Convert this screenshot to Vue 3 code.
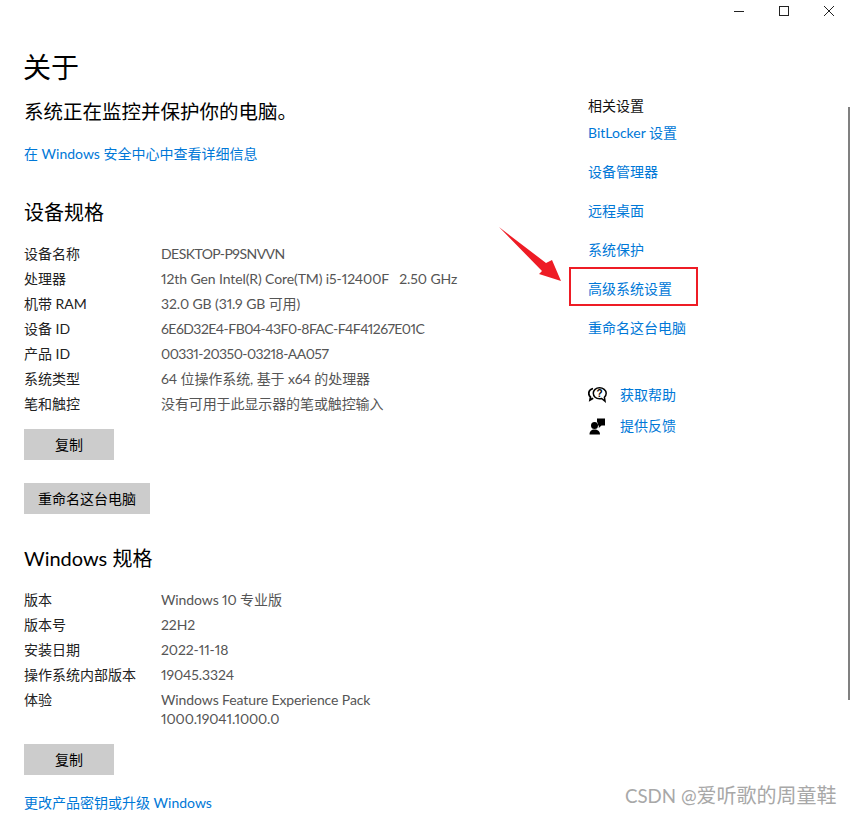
<script setup>
const spec1 = [
  ['设备名称', 'DESKTOP-P9SNVVN', true],
  ['处理器', '12th Gen Intel(R) Core(TM) i5-12400F   2.50 GHz'],
  ['机带 RAM', '32.0 GB (31.9 GB 可用)'],
  ['设备 ID', '6E6D32E4-FB04-43F0-8FAC-F4F41267E01C', true],
  ['产品 ID', '00331-20350-03218-AA057', true],
  ['系统类型', '64 位操作系统, 基于 x64 的处理器'],
  ['笔和触控', '没有可用于此显示器的笔或触控输入'],
]
const spec2 = [
  ['版本', 'Windows 10 专业版'],
  ['版本号', '22H2'],
  ['安装日期', '2022-11-18'],
  ['操作系统内部版本', '19045.3324'],
  ['体验', 'Windows Feature Experience Pack\n1000.19041.1000.0'],
]
const links = ['BitLocker 设置', '设备管理器', '远程桌面', '系统保护', '高级系统设置', '重命名这台电脑']
</script>

<template>
  <div class="window">
    <header class="titlebar">
      <svg class="cap" width="12" height="12" viewBox="0 0 12 12"><path d="M1 6.5H11" stroke="#222" fill="none" /></svg>
      <svg class="cap" width="12" height="12" viewBox="0 0 12 12"><rect x="1.5" y="1.5" width="9" height="9" stroke="#222" fill="none" /></svg>
      <svg class="cap" width="12" height="12" viewBox="0 0 12 12"><path d="M1 1L11 11M11 1L1 11" stroke="#222" fill="none" /></svg>
    </header>

    <div class="columns">
      <main class="main">
        <h1 class="title">关于</h1>
        <p class="status">系统正在监控并保护你的电脑。</p>
        <a class="link security">在 Windows 安全中心中查看详细信息</a>

        <h2 class="section first">设备规格</h2>
        <dl class="specs">
          <div v-for="row in spec1" :key="row[0]" class="row">
            <dt>{{ row[0] }}</dt>
            <dd :class="{ tight: row[2] }">{{ row[1] }}</dd>
          </div>
        </dl>
        <button class="btn copy1">复制</button>
        <button class="btn rename">重命名这台电脑</button>

        <h2 class="section second">Windows 规格</h2>
        <dl class="specs">
          <div v-for="row in spec2" :key="row[0]" class="row">
            <dt>{{ row[0] }}</dt>
            <dd>{{ row[1] }}</dd>
          </div>
        </dl>
        <button class="btn copy2">复制</button>
        <a class="link product">更改产品密钥或升级 Windows</a>
      </main>

      <aside class="side">
        <div class="side-title">相关设置</div>
        <div class="side-links">
          <a v-for="l in links" :key="l" class="link side-link" :class="{ boxed: l === '高级系统设置' }">{{ l }}</a>
        </div>
        <div class="help">
          <div class="help-row">
            <svg width="19" height="18" viewBox="0 0 19 18">
              <path d="M5 2.500C2.500 3.300 .8 5.200 .8 7.500c0 1.400.6 2.700 1.700 3.600L2 14l3.200-1.700" fill="none" stroke="#000" stroke-width="1.800" />
              <path d="M11.500 1.800C8 1.800 5.300 4.200 5.300 7.300c0 3.100 2.700 5.500 6.200 5.500 .8 0 1.500-.1 2.100-.3l3.400 2.700-.6-4c1.100-1 1.800-2.400 1.800-3.900C18.200 4.200 15 1.800 11.500 1.800z" fill="#fff" stroke="#000" stroke-width="1.500" />
              <text x="11.600" y="10.800" text-anchor="middle" class="qmark">?</text>
            </svg>
            <a class="link">获取帮助</a>
          </div>
          <div class="help-row">
            <svg width="19" height="18" viewBox="0 0 19 18">
              <circle cx="6.500" cy="8.500" r="3.500" fill="#000" />
              <path d="M1.500 17.500c0-3.500 2-5 5-5s5.500 1.500 5.500 5z" fill="#000" />
              <path d="M9 1.500h8v7h-3.500L10.800 11V8.500H10c.3-1.500-.2-2.700-1-3.500z" fill="#000" />
            </svg>
            <a class="link">提供反馈</a>
          </div>
        </div>
      </aside>
    </div>

    <div class="scrollbar"></div>

    <svg class="arrow" width="64" height="56" viewBox="0 0 64 56">
      <path d="M0 0L47 36L53 33L62 54L40 47L43 44Z" fill="#ee1c25" />
    </svg>
    <div class="watermark"><span class="wm-latin">CSDN @</span>爱听歌的周童鞋</div>
  </div>
</template>

<style>
html, body { margin: 0; background: #fff; }
</style>

<style scoped>
.window {
  position: relative;
  width: 852px;
  height: 814px;
  overflow: hidden;
  background: #fff;
  color: #000;
  font-family: Lato, "Noto Sans CJK SC", sans-serif;
  font-size: 14px;
}
.titlebar {
  display: flex;
  justify-content: flex-end;
  gap: 33px;
  height: 22px;
  padding: 5px 17px 0 0;
  box-sizing: border-box;
}
.cap { display: block; }
.columns { display: flex; }
.main {
  width: 588px;
  padding-left: 24px;
  box-sizing: border-box;
  display: flex;
  flex-direction: column;
  align-items: flex-start;
}
.title { margin: 24px 0 0 -1px; font-size: 28px; font-weight: 400; line-height: 42px; }
.status { margin: 10px 0 0; font-size: 19.500px; line-height: 28px; }
.link { color: #0078d7; text-decoration: none; line-height: 20px; display: block; }
.security { margin-top: 18px; }
.section { margin: 0; font-size: 20px; font-weight: 400; line-height: 28px; }
.section.first { margin-top: 34px; }
.section.second { margin-top: 30px; }
.specs { margin: 16px 0 0; }
.row { display: flex; }
dt { width: 137px; color: #222; line-height: 17px; padding: 3px 0 5px; }
dd {
  margin: 0;
  color: #555;
  white-space: pre-wrap;
  line-height: 18.500px;
  padding: 3px 0;
  font-variant-numeric: proportional-nums;
  letter-spacing: -0.1px;
}
dd.tight { letter-spacing: -0.550px; }
.btn {
  border: 0;
  background: #ccc;
  color: #000;
  font: inherit;
  height: 31px;
  padding: 0 14px 2px;
  display: block;
}
.copy1, .copy2 { width: 90px; padding: 0 0 2px; }
.copy1 { margin-top: 12px; }
.rename { margin-top: 23px; }
.copy2 { margin-top: 13px; }
.product { margin-top: 18px; }
.side { padding-top: 74px; }
.side-title { line-height: 20px; color: #111; }
.side-links { display: flex; flex-direction: column; gap: 19px; margin-top: 7px; }
.side-link { position: relative; }
.boxed::before {
  content: "";
  position: absolute;
  left: -19px;
  top: -12px;
  width: 125px;
  height: 35px;
  border: 2px solid #ee1c25;
}
.help { margin-top: 47px; display: flex; flex-direction: column; gap: 11px; }
.help-row { display: flex; align-items: center; gap: 13px; height: 20px; }
.qmark { font-size: 10px; font-weight: 700; fill: #000; font-family: "Liberation Sans", sans-serif; }
.scrollbar {
  position: absolute;
  right: 2px;
  top: 107px;
  width: 2px;
  height: 593px;
  background: #808080;
}
.arrow { position: absolute; left: 499px; top: 227px; overflow: visible; }
.watermark {
  position: absolute;
  left: 625px;
  top: 783px;
  font-size: 20px;
  line-height: 24px;
  color: #a8a8a8;
  white-space: nowrap;
}
.wm-latin { font-size: 18.700px; }
</style>
